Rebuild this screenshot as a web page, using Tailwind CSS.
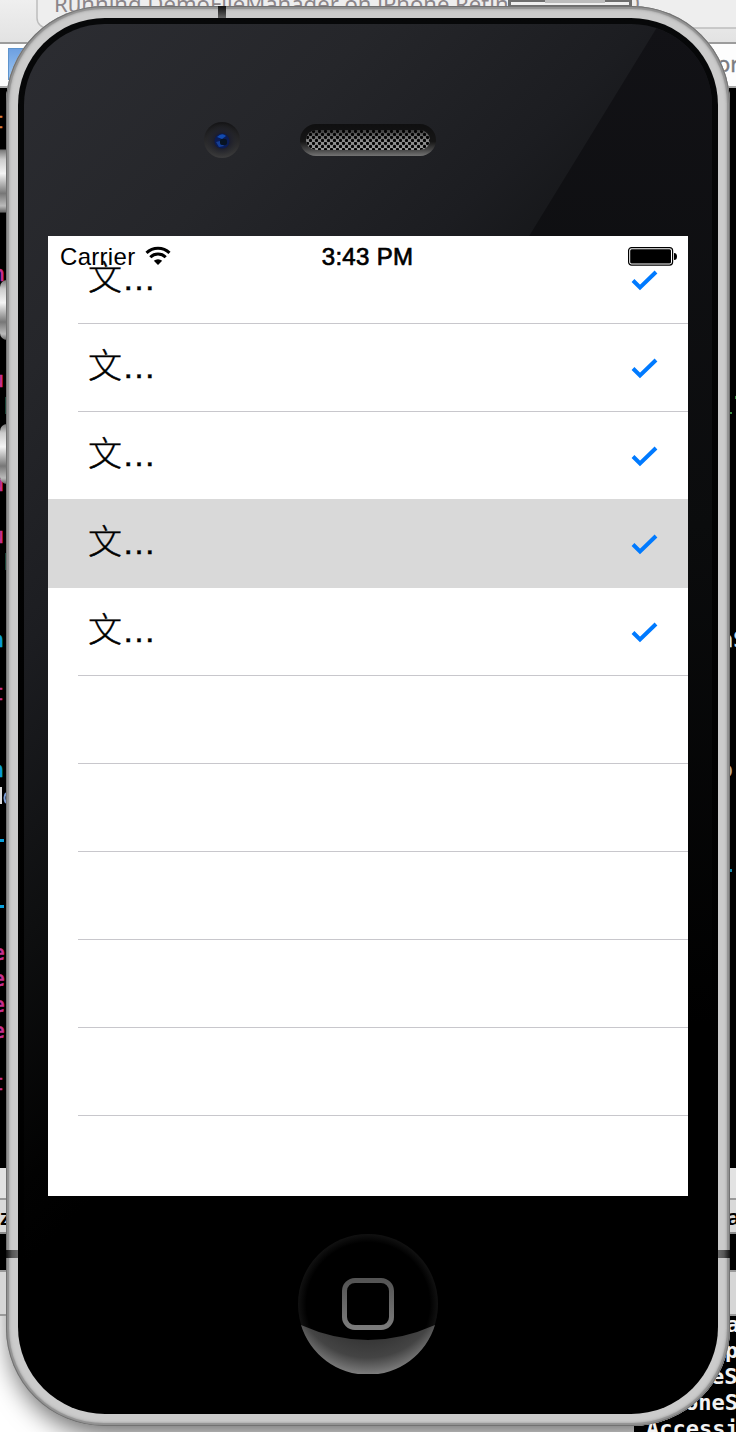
<!DOCTYPE html>
<html lang="en">
<head>
<meta charset="utf-8">
<title>iPhone Simulator</title>
<script src="https://cdn.jsdelivr.net/npm/@tailwindcss/browser@4"></script>
</head>
<body class="relative h-[1432px] w-[736px] overflow-hidden bg-black font-['Liberation_Sans',Arial,sans-serif] text-black">

<!-- Editor windows on the desktop behind the device -->
<svg class="absolute inset-0" width="736" height="1432" viewBox="0 0 736 1432">
  <defs>
    <linearGradient id="btn" x1="0" y1="0" x2="0" y2="1">
      <stop offset="0" stop-color="#777"/><stop offset=".15" stop-color="#ccc"/><stop offset=".38" stop-color="#f4f4f4"/><stop offset=".7" stop-color="#777"/><stop offset=".9" stop-color="#bbb"/><stop offset="1" stop-color="#666"/>
    </linearGradient>
    <linearGradient id="bar" x1="0" y1="0" x2="0" y2="1"><stop offset="0" stop-color="#efefef"/><stop offset="1" stop-color="#e2e2e2"/></linearGradient>
    <linearGradient id="folder" x1="0" y1="0" x2="0" y2="1"><stop offset="0" stop-color="#6d9fe0"/><stop offset="1" stop-color="#9cc6f2"/></linearGradient>
  </defs>
  <rect width="736" height="44" fill="url(#bar)"/>
  <path d="M37-10V18a10 10 0 0 0 10 10H746V-10z" fill="#eeeeee" stroke="#bdbdbd" stroke-width="1.5"/>
  <rect y="42" width="736" height="2" fill="#9c9c9c"/>
  <rect y="44" width="736" height="42" fill="#fdfdfd"/>
  <rect y="86" width="736" height="2" fill="#a8a8a8"/>
  <rect x="8.5" y="48.500" width="30" height="31" fill="url(#folder)" stroke="#5d93cc"/>
  <text x="54" y="11.500" font-size="22" textLength="467" lengthAdjust="spacingAndGlyphs" fill="#8b8589" font-family="Noto Sans, sans-serif">Running DemoFileManager on iPhone Retina</text>
  <text x="633" y="10" font-size="22" fill="#8b8589" font-family="Noto Sans, sans-serif">)</text>
  <rect x="508" y="-4" width="124" height="14" fill="#6e6e6e"/><rect x="511" y="2" width="118" height="3" fill="#eee"/><rect x="545" y="0" width="60" height="3" fill="#bdbdbd"/>
  <text x="717" y="72" font-size="22" fill="#7b7b80" stroke="#7b7b80" stroke-width=".4" font-family="Noto Sans, sans-serif">or</text>

  <rect y="1168" width="736" height="30" fill="#e3e3e3"/>
  <rect y="1198" width="736" height="2" fill="#999"/>
  <rect y="1200" width="736" height="32" fill="#d9d9d9"/>
  <rect y="1232" width="736" height="2" fill="#8d8d8d"/>
  <rect y="1270" width="736" height="2" fill="#999"/>
  <rect y="1272" width="736" height="42" fill="#d6d6d6"/>
  <rect y="1314" width="736" height="2" fill="#999"/>
  <rect y="1316" width="634" height="116" fill="#fff"/>
  <text x="0" y="1225" font-size="22" font-weight="600" font-family="Noto Sans, sans-serif">z</text>
  <text x="727" y="1225" font-size="22" font-weight="600" font-family="Noto Sans, sans-serif">a</text>

  <g font-family="DejaVu Sans Mono, monospace" font-size="22" text-anchor="end" stroke-width=".6">
    <g fill="#d9813f" stroke="#d9813f"><text x="4" y="128">t</text></g>
    <g fill="#c92f91" stroke="#c92f91">
      <text x="5" y="281">n</text><text x="4" y="387">u</text><text x="4" y="491">u</text><text x="4" y="543">u</text><text x="4" y="700">t</text>
      <text x="5" y="960">e</text><text x="5" y="986">e</text><text x="5" y="1012">e</text><text x="5" y="1038">e</text><text x="4" y="1090">t</text>
    </g>
    <g fill="#0aa0dc" stroke="#0aa0dc"><text x="4" y="647">n</text><text x="4" y="777">n</text></g>
    <g fill="#0aa0dc"><rect y="839" width="4" height="3"/><rect y="905" width="4" height="3"/></g>
    <rect y="787" width="2" height="17" fill="#ddd"/>
    <path d="M6 793q-3 5 0 10" fill="none" stroke="#7d9fd8" stroke-width="2"/>
    <path d="M5.500 397v17M5.500 553v17" stroke="#1b4638" stroke-width="1"/>
  </g>
  <g font-family="DejaVu Sans Mono, monospace" font-size="22">
    <text x="720" y="647" fill="#d5e4f2" stroke="#d5e4f2" stroke-width=".5">nS</text>
    <text x="720" y="777" fill="#b9a78d">o</text>
    <rect x="730" y="412" width="2" height="2" fill="#3a8a3f"/><rect x="735" y="396" width="2" height="3" fill="#3a8a3f"/>
    <rect x="730" y="869" width="2" height="3" fill="#1486a8"/>
  </g>
  <rect x="724" y="1316" width="12" height="116" fill="#000"/>
  <g font-family="DejaVu Sans Mono, monospace" font-size="22" font-weight="bold" fill="#f2f2f2">
    <text x="726" y="1332">a</text>
    <text x="725" y="1358">p</text>
    <text x="711" y="1384">eS</text>
    <text x="685" y="1410">oneS</text>
    <text x="646" y="1436">Accessi</text>
  </g>
  <rect x="-6" y="150" width="20" height="62" fill="url(#btn)" stroke="#777"/>
  <rect x="0" y="280" width="20" height="60" rx="7" fill="url(#btn)"/>
  <rect x="0" y="424" width="20" height="60" rx="7" fill="url(#btn)"/>
</svg>

<!-- Shadow cast on the window at the lower left -->
<div class="absolute bottom-0 left-0 h-[116px] w-[634px] overflow-hidden">
  <div class="absolute -top-[200px] left-[6px] h-[310px] w-[724px] rounded-[100px] shadow-[0_12px_26px_-4px_rgba(0,0,0,0.6)]"></div>
</div>

<!-- Device -->
<main class="absolute top-[6px] left-[6px] h-[1420px] w-[724px] rounded-[98px] bg-[#cbcbcb] p-3 shadow-[inset_0_0_0_1px_#727272,inset_0_0_1px_3px_#929292,inset_0_0_3px_4px_#b4b4b4]">
  <div class="absolute top-0 left-[212px] h-3 w-2 bg-linear-to-b from-[#111] to-[#666]"></div>
  <div class="absolute top-[1244px] left-0 h-2 w-3 bg-linear-to-r from-[#111] via-[#555] to-[#6d6d6d]"></div>
  <div class="absolute top-[1244px] right-0 h-2 w-3 bg-linear-to-l from-[#111] via-[#555] to-[#6d6d6d]"></div>

  <div class="h-full rounded-[87px] bg-linear-to-b from-[#070809] to-black p-1.5">
    <div class="relative flex h-full flex-col overflow-hidden rounded-[81px] bg-[linear-gradient(135deg,#2c2d32_0%,#25262a_17%,#1c1d21_30%,#0e0f10_44%,#020202_56%,#000_60%)]">
      <div class="absolute top-0 right-0 h-[1000px] w-[200px] bg-linear-to-b from-[#121216] via-[#0b0c0d] to-transparent [clip-path:polygon(147px_0,100%_0,100%_100%,0_100%,0_240px)]"></div>

      <header class="relative flex h-[212px] shrink-0 items-start">
        <div class="mt-[98px] ml-[180px] flex size-9 items-center justify-center rounded-full bg-linear-to-b from-[#141416] to-[#3b3b3c]">
          <svg width="36" height="36" viewBox="0 0 36 36">
            <defs><radialGradient id="lens"><stop offset="0" stop-color="#16182a"/><stop offset=".5" stop-color="#1f202c"/><stop offset="1" stop-color="#2a2b2d" stop-opacity="0"/></radialGradient></defs>
            <circle cx="18" cy="18" r="17" fill="url(#lens)"/>
            <circle cx="18" cy="19" r="7.500" fill="#0b1c55"/><path d="M13 15q5-5 9-1l-4 3z" fill="#124bb0"/><path d="M12 20l3 5 5-1-4-5z" fill="#143e96"/><rect x="16" y="17" width="7" height="6" rx="2" fill="#071322"/>
          </svg>
        </div>
        <svg class="mt-[100px] ml-[60px]" width="136" height="32" viewBox="0 0 136 32">
          <defs>
            <linearGradient id="rim" x1="0" y1="0" x2="0" y2="1"><stop offset="0" stop-color="#0f0f10"/><stop offset=".55" stop-color="#161616"/><stop offset=".8" stop-color="#444"/><stop offset="1" stop-color="#747474"/></linearGradient>
            <linearGradient id="mesh" x1="0" y1="0" x2="0" y2="1"><stop offset="0" stop-color="#3c3c3c"/><stop offset=".5" stop-color="#888"/><stop offset="1" stop-color="#999"/></linearGradient>
            <pattern id="holes" width="6" height="6" patternUnits="userSpaceOnUse"><circle cx="1.500" cy="1.500" r="1.650" fill="#030303"/><circle cx="4.500" cy="4.500" r="1.650" fill="#030303"/></pattern>
          </defs>
          <rect width="136" height="32" rx="16" fill="url(#rim)"/>
          <rect x="6" y="6" width="124" height="20" rx="10" fill="url(#mesh)"/>
          <rect x="6" y="6" width="124" height="20" rx="10" fill="url(#holes)"/>
        </svg>
      </header>

      <section class="relative mx-6 h-[960px] shrink-0 overflow-hidden bg-white">
        <ul class="text-[34px] leading-[82px]">
          <li class="flex h-[88px] items-center justify-between pr-[30px] pl-10 bg-[linear-gradient(#c8c7cc,#c8c7cc)] bg-[length:610px_1px] bg-[position:30px_87px] bg-no-repeat"><span class="mb-[6px] [-webkit-text-stroke:0.4px_#000]"><span class="font-['Noto_Sans_CJK_SC',sans-serif] font-light">文</span>…</span><svg class="mt-[2px]" width="28" height="22" viewBox="0 0 28 22" fill="none" stroke="#007aff" stroke-width="4"><path d="M3 10.500 10 17.500 26 2"/></svg></li>
          <li class="flex h-[88px] items-center justify-between pr-[30px] pl-10 bg-[linear-gradient(#c8c7cc,#c8c7cc)] bg-[length:610px_1px] bg-[position:30px_87px] bg-no-repeat"><span class="mb-[6px] [-webkit-text-stroke:0.4px_#000]"><span class="font-['Noto_Sans_CJK_SC',sans-serif] font-light">文</span>…</span><svg class="mt-[2px]" width="28" height="22" viewBox="0 0 28 22" fill="none" stroke="#007aff" stroke-width="4"><path d="M3 10.500 10 17.500 26 2"/></svg></li>
          <li class="flex h-[88px] items-center justify-between pr-[30px] pl-10"><span class="mb-[6px] [-webkit-text-stroke:0.4px_#000]"><span class="font-['Noto_Sans_CJK_SC',sans-serif] font-light">文</span>…</span><svg class="mt-[2px]" width="28" height="22" viewBox="0 0 28 22" fill="none" stroke="#007aff" stroke-width="4"><path d="M3 10.500 10 17.500 26 2"/></svg></li>
          <li class="-mt-px flex h-[89px] items-center justify-between bg-[#d9d9d9] pt-px pr-[30px] pl-10"><span class="mb-[6px] [-webkit-text-stroke:0.4px_#000]"><span class="font-['Noto_Sans_CJK_SC',sans-serif] font-light">文</span>…</span><svg class="mt-[2px]" width="28" height="22" viewBox="0 0 28 22" fill="none" stroke="#007aff" stroke-width="4"><path d="M3 10.500 10 17.500 26 2"/></svg></li>
          <li class="flex h-[88px] items-center justify-between pr-[30px] pl-10 bg-[linear-gradient(#c8c7cc,#c8c7cc)] bg-[length:610px_1px] bg-[position:30px_87px] bg-no-repeat"><span class="mb-[6px] [-webkit-text-stroke:0.4px_#000]"><span class="font-['Noto_Sans_CJK_SC',sans-serif] font-light">文</span>…</span><svg class="mt-[2px]" width="28" height="22" viewBox="0 0 28 22" fill="none" stroke="#007aff" stroke-width="4"><path d="M3 10.500 10 17.500 26 2"/></svg></li>
          <li class="ml-[30px] h-[88px] border-b border-[#c8c7cc]"></li>
          <li class="ml-[30px] h-[88px] border-b border-[#c8c7cc]"></li>
          <li class="ml-[30px] h-[88px] border-b border-[#c8c7cc]"></li>
          <li class="ml-[30px] h-[88px] border-b border-[#c8c7cc]"></li>
          <li class="ml-[30px] h-[88px] border-b border-[#c8c7cc]"></li>
        </ul>

        <!-- Status bar overlays the scrolled list -->
        <div class="absolute inset-x-0 top-0 grid h-10 grid-cols-3 items-center pr-[10px] pl-3 text-2xl leading-[38px]">
          <div class="flex items-center gap-[10px]"><span class="pt-[2px] tracking-[0.3px]">Carrier</span>
            <svg width="26" height="20" viewBox="0 0 26 20" fill="none" stroke="#000" stroke-width="3"><path d="M1.500 6.800a16.500 16.500 0 0 1 23 0M5.300 11.200a11 11 0 0 1 15.400 0"/><path d="M13 19l-4.200-4.200a6.200 6.200 0 0 1 8.400 0z" fill="#000" stroke="none"/></svg>
          </div>
          <span class="pt-[2px] pr-[3px] text-center tracking-[0.3px] [-webkit-text-stroke:0.7px_#000]">3:43 PM</span>
          <svg class="justify-self-end" width="50" height="20" viewBox="0 0 50 20"><rect x=".6" y="1.600" width="44" height="17.500" rx="3" fill="#fff" stroke="#000" stroke-width="1.200"/><rect x="2.200" y="3.200" width="40.800" height="14.300" rx="1.500"/><path d="M46 7q3 0 3 3.500t-3 3.500z"/></svg>
        </div>
      </section>

      <footer class="flex grow items-start justify-center pt-[38px]">
        <svg width="140" height="140" viewBox="0 0 140 140">
          <defs>
            <radialGradient id="home"><stop offset=".88" stop-color="#000"/><stop offset="1" stop-color="#111"/></radialGradient>
            <radialGradient id="shine" cx="70" cy="50" r="90" gradientUnits="userSpaceOnUse"><stop offset=".6" stop-color="#353535"/><stop offset=".82" stop-color="#444"/><stop offset="1" stop-color="#7c7c7c"/></radialGradient>
            <linearGradient id="sq" x1="0" y1="0" x2="0" y2="1"><stop offset="0" stop-color="#545454"/><stop offset="1" stop-color="#7b7b7b"/></linearGradient>
          </defs>
          <circle cx="70" cy="70" r="70" fill="url(#home)"/>
          <path d="M3 91Q70 121 137 91A70 70 0 0 1 3 91z" fill="url(#shine)"/>
          <rect x="46.500" y="46.500" width="47" height="47" rx="10.500" fill="#000" stroke="url(#sq)" stroke-width="5"/>
        </svg>
      </footer>
    </div>
  </div>
</main>
</body>
</html>
